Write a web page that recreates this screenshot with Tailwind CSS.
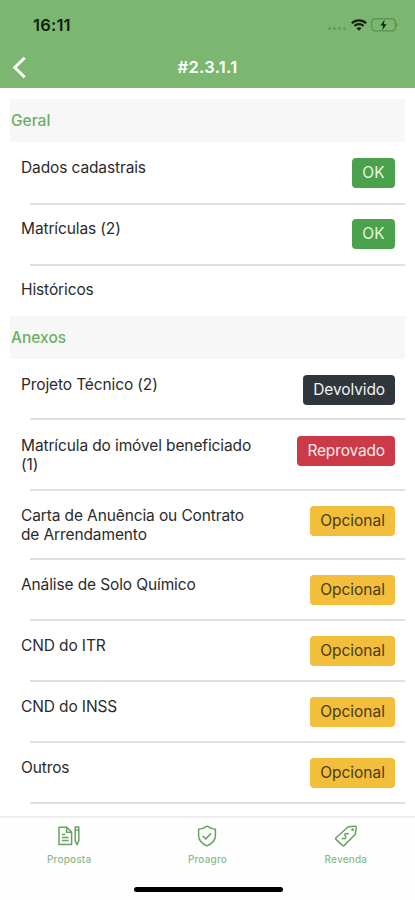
<!DOCTYPE html>
<html lang="pt-BR">
<head>
  <meta charset="UTF-8" />
  <meta name="viewport" content="width=device-width, initial-scale=1.0"/>
  <title>Proposta #2.3.1.1</title>
  <script src="https://cdn.jsdelivr.net/npm/@tailwindcss/browser@4"></script>
</head>
<body class="bg-white font-['Inter',sans-serif] text-[#2b2b2b]">
  <div class="h-[900px] flex flex-col overflow-hidden">

    <!-- Header -->
    <header class="h-[88px] shrink-0 bg-[#7cb772] flex flex-col">
      <!-- Status bar -->
      <div class="h-[46px] pt-1 pl-[33px] pr-[17px] flex justify-between items-center">
        <span class="text-[16.5px] font-semibold tracking-[0.2px] text-[#10200e]">16:11</span>
        <div class="flex items-center gap-1">
          <div class="flex gap-[2px] pt-[7px] pr-[1px]">
            <span class="w-[3px] h-[3px] rounded-full bg-[#629c5a]"></span>
            <span class="w-[3px] h-[3px] rounded-full bg-[#629c5a]"></span>
            <span class="w-[3px] h-[3px] rounded-full bg-[#629c5a]"></span>
            <span class="w-[3px] h-[3px] rounded-full bg-[#629c5a]"></span>
          </div>
          <svg class="w-4 h-3" viewBox="0 0 16 12" fill="none" stroke="#10200e" stroke-width="2.3">
            <path d="M0.8 4.3C4.8 0.3 11.2 0.3 15.2 4.3"/>
            <path d="M3.5 7C6 4.6 10 4.6 12.5 7"/>
            <path d="M8 11.8L5.5 9.2C6.9 7.9 9.1 7.9 10.5 9.2Z" fill="#10200e" stroke="none"/>
          </svg>
          <svg class="w-[27px] h-[14px]" viewBox="0 0 27 14" fill="none">
            <rect x="0.7" y="0.9" width="23.6" height="12" rx="3.2" stroke="#55904e" stroke-width="1.1"/>
            <path d="M25.4 5v4c1.6-.6 1.6-3.4 0-4z" fill="#55904e"/>
            <path d="M13.6 1.8L9.4 7.6h2.7l-.8 4.6 4.3-5.9h-2.8z" fill="#10200e"/>
          </svg>
        </div>
      </div>
      <!-- Title -->
      <div class="h-[42px] grid grid-cols-[60px_1fr_60px] items-center text-white">
        <button class="pl-[12px]">
          <svg class="w-[15px] h-[23px]" viewBox="0 0 15 23" fill="none" stroke="#fff" stroke-width="3">
            <path d="M12.7 1.8L2.8 11.5L12.7 21.2"/>
          </svg>
        </button>
        <h1 class="text-center text-[16.5px] font-semibold tracking-[0.3px]">#2.3.1.1</h1>
      </div>
    </header>

    <!-- Lists -->
    <main id="sections" class="flex-1 overflow-hidden px-[10px] pt-[11px]"></main>

    <!-- Tab bar -->
    <nav class="h-[84px] shrink-0 border-t-2 border-[#ededed] bg-[#fdfefd] flex flex-col justify-between">
      <div class="grid grid-cols-3 text-[10px] leading-3 font-medium text-[#8dbb88]">
        <button class="flex flex-col items-center gap-[6px] pt-[7px]">
          <svg class="w-6 h-[22px]" viewBox="0 0 24 22" fill="none" stroke="#68a261" stroke-width="1.5" stroke-linejoin="round">
            <path d="M2 2.2H9.8L14.6 7V19.4H2Z"/>
            <path d="M9.6 2.4V7.2H14.4M4.8 9.6H8M4.8 12.6H11.6M4.8 15.6H11.6"/>
            <path d="M18.2 2H21.8V16L20 19.6L18.2 16ZM18.2 5H21.8"/>
          </svg>
          <span class="tracking-[0.2px]">Proposta</span>
        </button>
        <button class="flex flex-col items-center gap-[6px] pt-[7px]">
          <svg class="w-6 h-[22px]" viewBox="0 0 24 22" fill="none" stroke="#68a261" stroke-width="1.5" stroke-linejoin="round">
            <path d="M12 1.2C9.4 3 6.6 4 3.6 4.2V10.5C3.6 15 7 18.8 12 20.9C17 18.8 20.4 15 20.4 10.5V4.2C17.4 4 14.6 3 12 1.2Z"/>
            <path d="M7.8 11L10.7 13.9L16.2 8.3"/>
          </svg>
          <span class="tracking-[0.2px]">Proagro</span>
        </button>
        <button class="flex flex-col items-center gap-[6px] pt-[7px]">
          <svg class="w-6 h-[22px]" viewBox="0 0 24 22" fill="none" stroke="#68a261" stroke-width="1.5" stroke-linejoin="round">
            <path d="M14.2 1.8L21.3 1.2Q22.2 1.2 22.2 2.1L21.4 9.2L10.2 20.4Q9.3 21.1 8.4 20.4L2 14.4Q1.3 13.5 2 12.7Z"/>
            <circle cx="18.6" cy="4.7" r="0.6"/>
            <path d="M13.6 9.2C11.8 7.6 9.8 9.4 11.3 11.1C12.8 12.8 11 14.6 9 13M13.8 9L14.7 8.1M8.8 13.3L7.9 14.2"/>
          </svg>
          <span class="tracking-[0.2px]">Revenda</span>
        </button>
      </div>
      <div class="w-[149px] h-[5px] rounded-full bg-black mb-2 ml-[134px]"></div>
    </nav>
  </div>

  <script>
    const badges = {
      "OK": "bg-[#4ba24c] text-[#e6f6e3] tracking-[0.3px]",
      "Devolvido": "bg-[#30363b] text-[#f1f2f3] tracking-[-0.1px]",
      "Reprovado": "bg-[#cd3a47] text-[#fdeaec] tracking-[-0.15px]",
      "Opcional": "bg-[#f2be3c] text-[#4b3c14]"
    };

    const sections = [
      {
        title: "Geral",
        items: [
          { name: "Dados cadastrais", status: "OK", size: "h-[63px] pt-4" },
          { name: "Matrículas (2)", status: "OK", size: "h-[61px] pt-[14px]" },
          { name: "Históricos", status: "", size: "h-[50px] pt-[14px]" }
        ]
      },
      {
        title: "Anexos",
        items: [
          { name: "Projeto Técnico (2)", status: "Devolvido", size: "h-[61px] pt-4" },
          { name: "Matrícula do imóvel beneficiado (1)", status: "Reprovado", size: "h-[71px] pt-4" },
          { name: "Carta de Anuência ou Contrato de Arrendamento", status: "Opcional", size: "h-[69px] pt-[15px]" },
          { name: "Análise de Solo Químico", status: "Opcional", size: "h-[61px] pt-[15px]" },
          { name: "CND do ITR", status: "Opcional", size: "h-[61px] pt-[15px]" },
          { name: "CND do INSS", status: "Opcional", size: "h-[61px] pt-[15px]" },
          { name: "Outros", status: "Opcional", size: "h-[61px] pt-[15px]" }
        ]
      }
    ];

    function renderItem(item) {
      return `
        <li class="${item.size} flex flex-col justify-between">
          <div class="flex justify-between items-start pl-[11px] pr-[10px]">
            <span class="w-[240px] text-[15.5px] leading-[19px] tracking-[-0.12px]">${item.name}</span>
            ${item.status ? `<span class="${badges[item.status]} h-[30px] px-[10px] rounded-[4px] text-[15.5px] leading-[30px]">${item.status}</span>` : ""}
          </div>
          ${item.status ? `<div class="h-[2px] ml-[20px] bg-[#e0e0e0]"></div>` : ""}
        </li>
      `;
    }

    document.getElementById("sections").innerHTML = sections.map(section => `
      <section>
        <h2 class="h-[43px] bg-[#f7f7f7] pl-[1px] text-[15.5px] leading-[43px] font-medium text-[#6bb063]">${section.title}</h2>
        <ul>${section.items.map(renderItem).join("")}</ul>
      </section>
    `).join("");
  </script>
</body>
</html>
